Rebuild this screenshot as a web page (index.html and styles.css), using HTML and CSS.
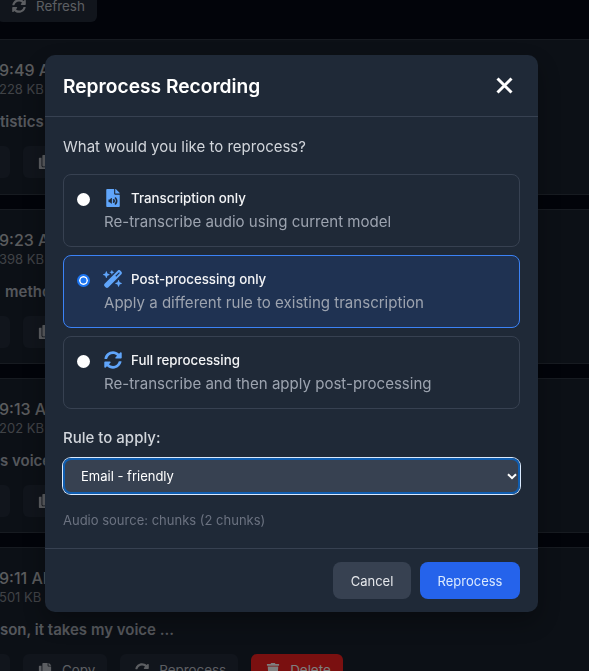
FILE: index.html
```html
<!DOCTYPE html>
<html lang="en">

<head>
    <meta charset="UTF-8">
    <meta name="viewport" content="width=device-width, initial-scale=1">
    <title>Reprocess Recording</title>
    <link rel="stylesheet" href="styles.css">
</head>

<body>
    <svg class="icon-defs" aria-hidden="true">
        <symbol id="i-sync" viewBox="0 0 512 512"><path d="M370.72 133.28C339.458 104.008 298.888 87.962 255.848 88c-77.458.068-144.328 53.178-162.791 126.85-1.344 5.363-6.122 9.15-11.651 9.15H24.103c-7.498 0-13.194-6.807-11.807-14.176C33.933 94.924 134.813 8 256 8c66.448 0 126.791 26.136 171.315 68.685L463.03 40.97C478.149 25.851 504 36.559 504 57.941V192c0 13.255-10.745 24-24 24H345.941c-21.382 0-32.09-25.851-16.971-40.971l41.75-41.749zM32 296h134.059c21.382 0 32.09 25.851 16.971 40.971l-41.75 41.75c31.262 29.273 71.835 45.319 114.876 45.28 77.418-.07 144.315-53.144 162.787-126.849 1.344-5.363 6.122-9.15 11.651-9.15h57.304c7.498 0 13.194 6.807 11.807 14.176C478.067 417.076 377.187 504 256 504c-66.448 0-126.791-26.136-171.315-68.685L48.97 471.03C33.851 486.149 8 475.441 8 454.059V320c0-13.255 10.745-24 24-24z"/></symbol>
        <symbol id="i-copy" viewBox="0 0 448 512"><path d="M320 448v40c0 13.255-10.745 24-24 24H24c-13.255 0-24-10.745-24-24V120c0-13.255 10.745-24 24-24h72v296c0 30.879 25.121 56 56 56h168zm0-344V0H152c-13.255 0-24 10.745-24 24v368c0 13.255 10.745 24 24 24h272c13.255 0 24-10.745 24-24V128H344c-13.2 0-24-10.8-24-24zm120.971-31.029L375.029 7.029A24 24 0 0 0 358.059 0H352v96h96v-6.059a24 24 0 0 0-7.029-16.97z"/></symbol>
        <symbol id="i-trash" viewBox="0 0 448 512"><path d="M432 32H312l-9.4-18.7A24 24 0 0 0 281.1 0H166.8a23.72 23.72 0 0 0-21.4 13.3L136 32H16A16 16 0 0 0 0 48v32a16 16 0 0 0 16 16h416a16 16 0 0 0 16-16V48a16 16 0 0 0-16-16zM53.2 467a48 48 0 0 0 47.9 45h245.8a48 48 0 0 0 47.9-45L416 128H32z"/></symbol>
        <symbol id="i-audio" viewBox="0 0 384 512"><path d="M224 136V0H24C10.7 0 0 10.7 0 24v464c0 13.3 10.7 24 24 24h336c13.3 0 24-10.7 24-24V160H248c-13.2 0-24-10.8-24-24zm-64 268c0 10.7-12.9 16-20.5 8.5L104 376H76c-6.6 0-12-5.4-12-12v-56c0-6.6 5.4-12 12-12h28l35.5-36.5c7.6-7.6 20.5-2.2 20.5 8.5v136zm33.2-47.6c9.1-9.3 9.1-24.1 0-33.4-22.1-22.8 12.2-56.2 34.4-33.5 27.2 27.9 27.2 72.4 0 100.4-21.8 22.3-56.9-10.4-34.4-33.5zm86-117.1c54.4 55.9 54.4 144.8 0 200.8-21.8 22.4-57-10.3-34.4-33.5 36.2-37.2 36.3-96.5 0-133.8-22.1-22.8 12.3-56.3 34.4-33.5zM384 121.9v6.1H256V0h6.1c6.4 0 12.5 2.5 17 7l97.9 98c4.5 4.5 7 10.6 7 16.9z"/></symbol>
        <symbol id="i-wand" viewBox="0 0 576 512"><path d="M234.7 42.7L197 56.8c-3 1.1-5 4-5 7.2s2 6.1 5 7.2l37.7 14.1L248.8 123c1.1 3 4 5 7.2 5s6.1-2 7.2-5l14.1-37.7L315 71.2c3-1.1 5-4 5-7.2s-2-6.1-5-7.2L277.3 42.7 263.2 5c-1.1-3-4-5-7.2-5s-6.1 2-7.2 5L234.7 42.7zM46.1 395.4c-18.7 18.7-18.7 49.1 0 67.9l34.6 34.6c18.7 18.7 49.1 18.7 67.9 0L529.9 116.5c18.7-18.7 18.7-49.1 0-67.9L495.3 14.1c-18.7-18.7-49.1-18.7-67.9 0L46.1 395.4zM484.6 82.6l-105 105-23.3-23.3 105-105 23.3 23.3zM7.5 117.2C3 118.9 0 123.2 0 128s3 9.1 7.5 10.8L64 160l21.2 56.5c1.7 4.5 6 7.5 10.8 7.5s9.1-3 10.8-7.5L128 160l56.5-21.2c4.5-1.7 7.5-6 7.5-10.8s-3-9.1-7.5-10.8L128 96 106.8 39.5C105.1 35 100.8 32 96 32s-9.1 3-10.8 7.5L64 96 7.5 117.2zm352 256c-4.5 1.7-7.5 6-7.5 10.8s3 9.1 7.5 10.8L416 416l21.2 56.5c1.7 4.5 6 7.5 10.8 7.5s9.1-3 10.8-7.5L480 416l56.5-21.2c4.5-1.7 7.5-6 7.5-10.8s-3-9.1-7.5-10.8L480 352l-21.2-56.5c-1.7-4.5-6-7.5-10.8-7.5s-9.1 3-10.8 7.5L416 352l-56.5 21.2z"/></symbol>
    </svg>

    <main class="page">
        <div class="toolbar">
            <button type="button" class="btn">
                <svg class="btn-icon"><use href="#i-sync"></use></svg>Refresh
            </button>
        </div>

        <article class="card">
            <div class="card-time">9:49 AM</div>
            <div class="card-size">228 KB</div>
            <p class="card-text">tistics</p>
            <div class="card-actions">
                <button type="button" class="btn btn-stub"></button>
                <button type="button" class="btn"><svg class="btn-icon"><use href="#i-copy"></use></svg>Copy</button>
            </div>
        </article>

        <article class="card">
            <div class="card-time">9:23 AM</div>
            <div class="card-size">398 KB</div>
            <p class="card-text card-text-inset">methods</p>
            <div class="card-actions">
                <button type="button" class="btn btn-stub"></button>
                <button type="button" class="btn"><svg class="btn-icon"><use href="#i-copy"></use></svg>Copy</button>
            </div>
        </article>

        <article class="card">
            <div class="card-time">9:13 AM</div>
            <div class="card-size">202 KB</div>
            <p class="card-text">s voice</p>
            <div class="card-actions">
                <button type="button" class="btn btn-stub"></button>
                <button type="button" class="btn"><svg class="btn-icon"><use href="#i-copy"></use></svg>Copy</button>
            </div>
        </article>

        <article class="card">
            <div class="card-time">9:11 AM</div>
            <div class="card-size">501 KB</div>
            <p class="card-text">son, it takes my voice ...</p>
            <div class="card-actions">
                <button type="button" class="btn btn-stub"></button>
                <button type="button" class="btn"><svg class="btn-icon"><use href="#i-copy"></use></svg>Copy</button>
                <button type="button" class="btn"><svg class="btn-icon"><use href="#i-sync"></use></svg>Reprocess</button>
                <button type="button" class="btn btn-delete"><svg class="btn-icon"><use href="#i-trash"></use></svg>Delete</button>
            </div>
        </article>
    </main>

    <div class="overlay">
        <div class="modal">
            <header class="modal-header">
                <h2 class="modal-title">Reprocess Recording</h2>
                <button type="button" class="modal-close" aria-label="Close">
                    <svg viewBox="0 0 17 17" width="17" height="17">
                        <path d="M1.5 1.5l14 14M15.5 1.5l-14 14" />
                    </svg>
                </button>
            </header>

            <div class="modal-body">
                <p class="prompt">What would you like to reprocess?</p>

                <div class="options">
                    <label class="option">
                        <input type="radio" name="mode">
                        <span class="option-main">
                            <span class="option-head">
                                <span class="option-icon"><svg class="icon-audio"><use href="#i-audio"></use></svg></span>
                                <span class="option-title">Transcription only</span>
                            </span>
                            <span class="option-desc">Re-transcribe audio using current model</span>
                        </span>
                    </label>
                    <label class="option selected">
                        <input type="radio" name="mode" checked>
                        <span class="option-main">
                            <span class="option-head">
                                <span class="option-icon"><svg class="icon-wand"><use href="#i-wand"></use></svg></span>
                                <span class="option-title">Post-processing only</span>
                            </span>
                            <span class="option-desc">Apply a different rule to existing transcription</span>
                        </span>
                    </label>
                    <label class="option">
                        <input type="radio" name="mode">
                        <span class="option-main">
                            <span class="option-head">
                                <span class="option-icon"><svg class="icon-sync"><use href="#i-sync"></use></svg></span>
                                <span class="option-title">Full reprocessing</span>
                            </span>
                            <span class="option-desc">Re-transcribe and then apply post-processing</span>
                        </span>
                    </label>
                </div>

                <label class="rule-label" for="rule">Rule to apply:</label>
                <div class="select-wrap">
                    <select id="rule" class="rule-select">
                        <option>Email - friendly</option>
                    </select>
                    <svg class="select-arrow" viewBox="0 0 10 7" width="10" height="7">
                        <path d="M1 1.2l4 4 4-4" />
                    </svg>
                </div>
                <p class="source-note">Audio source: chunks (2 chunks)</p>
            </div>

            <footer class="modal-footer">
                <button type="button" class="modal-btn btn-cancel">Cancel</button>
                <button type="button" class="modal-btn btn-primary">Reprocess</button>
            </footer>
        </div>
    </div>
</body>

</html>
```

FILE: styles.css
```css
:root {
    --gray-800: #1f2937;
    --gray-700: #374151;
    --gray-500: #6b7280;
    --gray-400: #9ca3af;
    --gray-300: #d1d5db;
    --gray-200: #e5e7eb;
    --blue-600: #2563eb;
    --blue-500: #3b82f6;
    --blue-400: #60a5fa;

    /* Page colours, seen through the overlay */
    --page-bg: #040814;
    --page-card: #18202c;
    --page-line: #2f3743;
    --page-btn: #222a38;
}

* {
    box-sizing: border-box;
}

html,
body {
    height: 100%;
    margin: 0;
    overflow: hidden;
    background-color: var(--page-bg);
    font-family: Inter, "Noto Sans", sans-serif;
}

.icon-defs {
    display: none;
}

/* Page behind the dialog */
.page {
    display: flow-root;
    height: 100%;
    overflow: hidden;
}

.toolbar {
    height: 32px;
    margin-top: -10px;
    margin-bottom: 17.33px;
}

.btn {
    display: inline-flex;
    align-items: center;
    gap: 10px;
    height: 32px;
    padding: 0 12px 0 15px;
    border: 0;
    border-radius: 6px;
    background-color: var(--page-btn);
    color: #b9bdc4;
    font-family: inherit;
    font-size: 13.4px;
}

.toolbar .btn {
    margin-left: -3px;
}

.btn-icon {
    width: 14px;
    height: 14px;
    fill: currentColor;
}

.btn-stub {
    width: 40px;
    margin-left: -30px;
}

.btn-delete {
    background-color: #f42020;
    color: #fff;
}

.card {
    height: 155.33px;
    margin-bottom: 14px;
    padding-top: 20px;
    border-top: 1px solid var(--page-line);
    border-bottom: 1px solid var(--page-line);
    background-color: var(--page-card);
    white-space: nowrap;
}

.card-time {
    margin-left: -1px;
    color: #b4b6ba;
    font-size: 16px;
    font-weight: 500;
    line-height: 20px;
}

.card-size {
    margin-left: -1px;
    color: #80848d;
    font-size: 13px;
    line-height: 18px;
}

.card-text {
    margin: 14px 0 0;
    color: #aaafb9;
    font-size: 15px;
    font-weight: 600;
    line-height: 20px;
}

.card-text-inset {
    padding-left: 5px;
}

.card-actions {
    display: flex;
    gap: 13px;
    margin-top: 14px;
}

/* Dialog */
.overlay {
    position: fixed;
    inset: 0;
    display: flex;
    align-items: center;
    justify-content: center;
    padding: 0 6px 4px 0;
    background-color: rgba(0, 0, 0, 0.5);
}

.modal {
    width: 493px;
    height: 557px;
    border-radius: 10px;
    background-color: var(--gray-800);
    box-shadow: 0 10px 25px rgba(0, 0, 0, 0.3);
    color: var(--gray-200);
}

.modal-header {
    display: flex;
    align-items: center;
    justify-content: space-between;
    height: 62px;
    padding: 0 25px 0 18px;
    border-bottom: 1px solid var(--gray-700);
}

.modal-title {
    margin: 0;
    color: #fff;
    font-size: 19.2px;
    font-weight: 600;
    line-height: 60px;
}

.modal-close {
    display: flex;
    padding: 0;
    border: 0;
    background: none;
}

.modal-close path {
    fill: none;
    stroke: #fff;
    stroke-width: 3;
}

.modal-body {
    height: 431px;
    padding: 20px 18px 0;
}

.prompt {
    margin: 0 0 17px;
    color: var(--gray-300);
    font-size: 15px;
    line-height: 20px;
}

.options {
    display: flex;
    flex-direction: column;
    gap: 8px;
}

.option {
    display: flex;
    align-items: flex-start;
    gap: 14px;
    height: 73px;
    padding: 13px 13px 0;
    border: 1px solid var(--gray-700);
    border-radius: 8px;
}

.option.selected {
    border-color: var(--blue-500);
    background-color: #1f3252;
}

.option input {
    flex: none;
    width: 13px;
    height: 13px;
    margin: 5px 0 0;
    border-radius: 50%;
    background-color: #fff;
    appearance: none;
}

.option input:checked {
    border: 2px solid #1d76f2;
    box-shadow: inset 0 0 0 1.5px #fff;
    background-color: #1d76f2;
}

.option-main {
    display: flex;
    flex-direction: column;
    gap: 4px;
}

.option-head {
    display: flex;
    align-items: center;
    height: 20px;
}

.option-icon {
    display: flex;
    align-items: center;
    justify-content: center;
    width: 18px;
    height: 18px;
    margin-right: 9px;
    color: var(--blue-400);
}

.option-icon svg {
    fill: currentColor;
}

.icon-audio {
    width: 14px;
    height: 18px;
}

.icon-wand {
    width: 20px;
    height: 18px;
    flex: none;
}

.icon-sync {
    width: 18px;
    height: 18px;
    flex: none;
}

.option-title {
    color: #f3f4f6;
    font-size: 13.3px;
    font-weight: 500;
    line-height: 20px;
}

.option-desc {
    color: var(--gray-400);
    font-size: 15.05px;
    line-height: 20px;
}

.rule-label {
    display: block;
    margin: 19px 0 10px;
    color: var(--gray-300);
    font-size: 15px;
    font-weight: 500;
    line-height: 20px;
}

.select-wrap {
    position: relative;
}

.rule-select {
    display: block;
    width: 100%;
    height: 36px;
    padding: 0 18px;
    border: 0;
    border-radius: 8px;
    outline: 0;
    box-shadow: 0 0 0 1px #dbeafe, inset 0 0 0 2px #0f5db0;
    background-color: var(--gray-700);
    color: #fff;
    font-family: inherit;
    font-size: 13px;
    appearance: none;
}

.select-arrow {
    position: absolute;
    top: 15px;
    right: 3px;
    fill: none;
    stroke: #fff;
    stroke-width: 2;
}

.source-note {
    margin: 16px 0 0;
    color: var(--gray-500);
    font-size: 13px;
    line-height: 20px;
}

.modal-footer {
    display: flex;
    justify-content: flex-end;
    gap: 9px;
    padding: 13px 18px 0;
    border-top: 1px solid var(--gray-700);
}

.modal-btn {
    height: 37px;
    border: 0;
    border-radius: 8px;
    font-family: inherit;
    font-size: 13px;
}

.btn-cancel {
    width: 78px;
    background-color: var(--gray-700);
    color: var(--gray-200);
}

.btn-primary {
    width: 100px;
    background-color: var(--blue-600);
    color: #dbeafe;
}
```
